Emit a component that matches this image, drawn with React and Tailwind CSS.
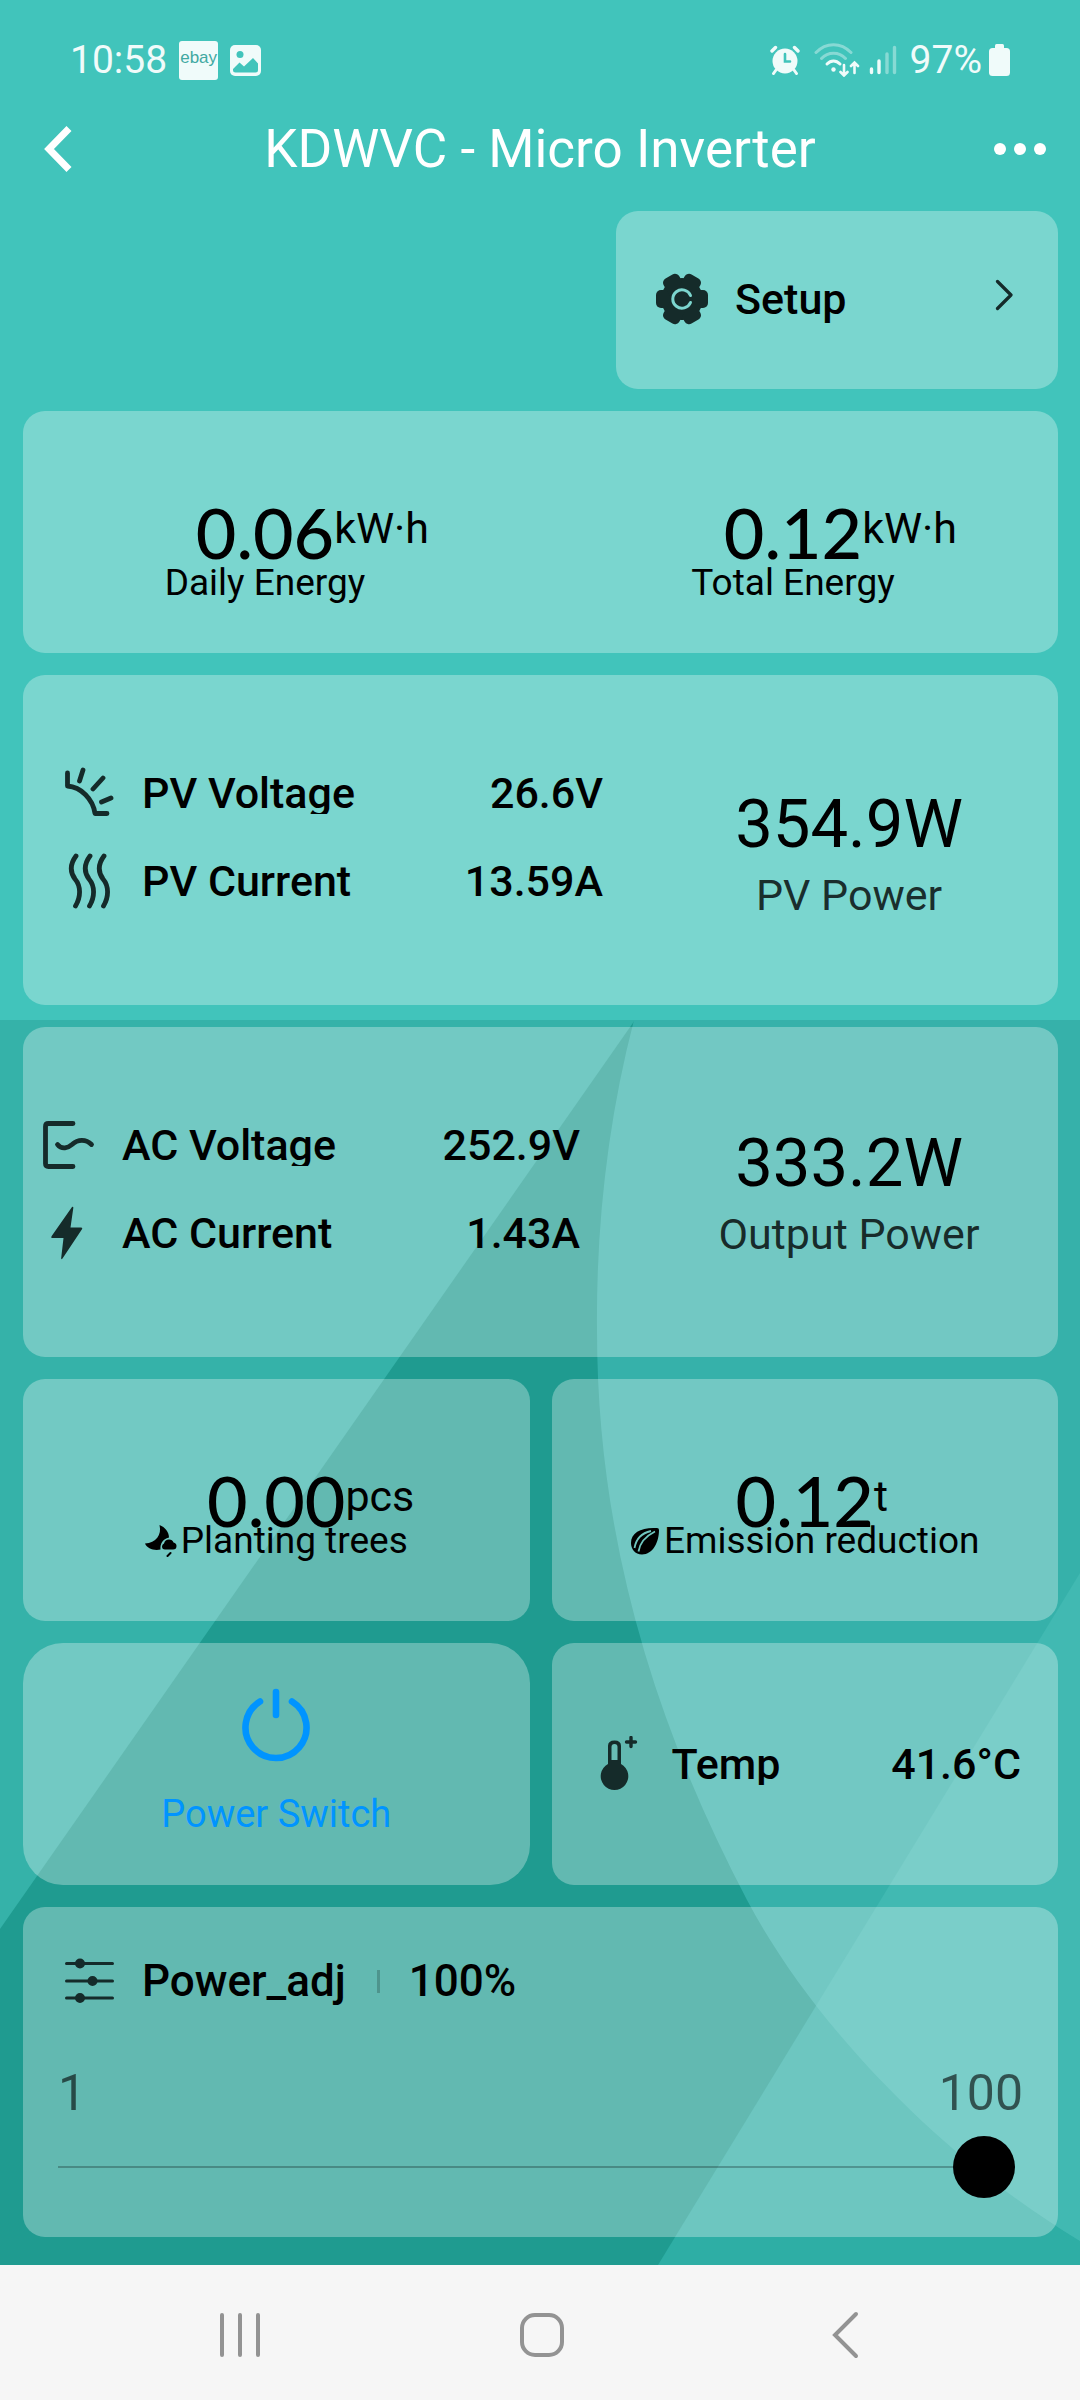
import { useState } from "react";

const INK = "#152b2a";

/* ---------- Icons ---------- */

function GearIcon() {
  return (
    <svg width="52" height="52" viewBox="-26 -26 52 52" fill={INK}>
      <circle r="21" />
      <rect x="-26" y="-9" width="52" height="18" rx="5" />
      <rect x="-26" y="-9" width="52" height="18" rx="5" transform="rotate(60)" />
      <rect x="-26" y="-9" width="52" height="18" rx="5" transform="rotate(120)" />
      <path d="M8.5 -3.5A9.2 9.2 0 1 0 8.5 3.5" fill="none" stroke="#7cd6cf" strokeWidth="3" strokeLinecap="round" />
    </svg>
  );
}

function SunIcon() {
  return (
    <svg width="52" height="52" viewBox="0 0 52 52" fill="none" stroke={INK} strokeWidth="4.8" strokeLinecap="round" strokeLinejoin="round">
      <path d="M4.5 6V19C18 20 30 32 32 46.500H44" />
      <path d="M20 3L16.500 14M40 11L30 22M48 31L38.500 35" />
    </svg>
  );
}

function WavesIcon() {
  return (
    <svg width="52" height="56" viewBox="0 0 52 56" fill="none" stroke={INK} strokeWidth="4.8" strokeLinecap="round">
      <path d="M13 3C7 11 7 19 12 26C18 33 18 44 12.500 53" />
      <path d="M27 3C21 11 21 19 26 26C32 33 32 44 26.500 53" />
      <path d="M41 3C35 11 35 19 40 26C46 33 46 44 40.500 53" />
    </svg>
  );
}

function OutputIcon() {
  return (
    <svg width="52" height="52" viewBox="0 0 52 52" fill="none" stroke={INK} strokeWidth="4.8" strokeLinecap="round" strokeLinejoin="round">
      <path d="M30 4.500H5.500Q2.500 4.500 2.500 7.500V44.500Q2.500 47.500 5.500 47.500H30" />
      <path d="M14.500 25.500C19 31 25 29 29 25.500C35 20 43 20 48.500 25.500" />
    </svg>
  );
}

function BoltIcon() {
  return (
    <svg width="52" height="54" viewBox="0 0 52 54" fill={INK}>
      <path d="M29 1Q30.500 0 30.300 2L27.500 21.500H38Q40 21.500 38.800 23.500L19.500 52.500Q18 54 18.200 52L20.500 32H9.500Q7.500 32 8.700 30Z" />
    </svg>
  );
}

function ThermometerIcon() {
  return (
    <svg width="52" height="56" viewBox="0 0 52 56">
      <path d="M15 28V10Q15 4.500 21.500 4.500Q28 4.500 28 10V28A13.800 13.800 0 1 1 15 28Z" fill={INK} />
      <path d="M18.500 24V11Q18.500 8 21.500 8Q24.500 8 24.500 11V24Z" fill="#69bdb6" />
      <path d="M38 1.500V10.500M33.500 6H42.500" stroke={INK} strokeWidth="3.4" strokeLinecap="round" />
    </svg>
  );
}

function SlidersIcon() {
  return (
    <svg width="52" height="48" viewBox="0 0 52 48" stroke={INK} strokeWidth="3" strokeLinecap="round" fill={INK}>
      <path d="M3.500 6.500H49.500M3.500 24H49.500M3.500 41H49.500" />
      <circle cx="17" cy="6.500" r="3.500" />
      <circle cx="29.500" cy="24" r="3.500" />
      <circle cx="17" cy="41" r="3.500" />
    </svg>
  );
}

function PowerIcon() {
  return (
    <svg width="68" height="74" viewBox="0 0 68 74" fill="none" stroke="#0094ff" strokeWidth="6.6" strokeLinecap="round">
      <path d="M34 4V27" />
      <path d="M18 13.500A30.500 30.500 0 1 0 50 13.500" />
    </svg>
  );
}

function TreeIcon() {
  return (
    <svg width="32" height="32" viewBox="0 0 32 32" fill="#000">
      <path d="M14.500 0C20 2 24 7 24 12.500C17.500 14 15 19 15.500 24.500C9 26 2 23.500 0 18.500C11 18 17 10 14.500 0Z" />
      <path d="M20 24.500Q17 24.500 17 21.500Q17 19.500 19 18.500Q20 14.500 24 14.500Q27.500 14.500 28.500 17.500Q31.500 18 31.500 21Q31.500 24.500 28 24.500Z" />
      <path d="M25.500 28L22.500 31" stroke="#000" strokeWidth="2" strokeLinecap="round" />
    </svg>
  );
}

function LeafIcon() {
  return (
    <svg width="30" height="28" viewBox="0 0 30 28">
      <path d="M27 1Q29 1 29 3C29 15 23 27.500 12 27.500C5 27.500 1 22 1 16C1 5 12 0 27 1Z" fill="#000" />
      <path d="M8.500 24.500C10 15 16 9 25 4.500M4.500 21C6 12 12 6 21 4" fill="none" stroke="#6fc6bf" strokeWidth="1.800" />
    </svg>
  );
}

function AlarmIcon() {
  return (
    <svg width="30" height="30" viewBox="0 0 30 30" fill="none" stroke="#f0fbfa" strokeLinecap="round">
      <circle cx="15" cy="16" r="12.500" fill="#f0fbfa" stroke="none" />
      <path d="M2 6L5.500 2.500M28 6L24.500 2.500" strokeWidth="3.400" />
      <path d="M6 25L3.500 28.500M24 25L26.500 28.500" strokeWidth="3" />
      <path d="M15 9V16.500H20" stroke="#41c4bb" strokeWidth="2.600" />
    </svg>
  );
}

function WifiIcon() {
  return (
    <svg width="46" height="34" viewBox="0 0 46 34" fill="none" stroke="#f0fbfa" strokeWidth="3" strokeLinecap="round">
      <path d="M2 9.500C12 -1 27 -1 37 9.500M7.500 15.500C14 8.500 25 8.500 31.500 15.500" opacity="0.4" />
      <path d="M13 21C17 17 22 17 26 21" />
      <circle cx="19.500" cy="26.500" r="2.200" fill="#f0fbfa" stroke="none" />
      <path d="M30 22V32M26.500 29L30 32.500L33.500 29M40.500 30V20M37 23L40.500 19.500L44 23" strokeWidth="2.600" />
    </svg>
  );
}

function SignalIcon() {
  return (
    <svg width="28" height="30" viewBox="0 0 28 30" stroke="#f0fbfa" strokeWidth="3.400" strokeLinecap="round">
      <path d="M2.500 24V27.500M10 16V27.500" />
      <path d="M18 9V27.500M25.500 2.500V27.500" opacity="0.4" />
    </svg>
  );
}

/* ---------- Building blocks ---------- */

function Card({ className = "", children }) {
  return <section className={`rounded-[22px] bg-white/30 ${className}`}>{children}</section>;
}

function IconBox({ children }) {
  return <span className="flex w-[52px] shrink-0 justify-center">{children}</span>;
}

function Reading({ icon, label, value }) {
  return (
    <div className="flex h-[42px] items-center gap-[27px] text-[43px] leading-[42px] font-medium">
      <IconBox>{icon}</IconBox>
      <span className="overflow-hidden">{label}</span>
      <span className="ml-auto">{value}</span>
    </div>
  );
}

function PowerTotal({ value, label, className = "" }) {
  return (
    <div className={`w-[418px] text-center ${className}`}>
      <p className="text-[67px] leading-[80px]">{value}</p>
      <p className="text-[43px] leading-[62px] text-black/80">{label}</p>
    </div>
  );
}

// The unit hangs off the number, so only the number itself is centred.
function Counter({ value, unit, label, icon, labelClass = "" }) {
  return (
    <div className="flex flex-col items-center pt-[92px]">
      <p className="relative font-['Lato','Roboto',sans-serif] text-[70px] leading-[58px] font-medium">
        {value}
        <span className="absolute -top-1 left-full font-['Roboto',sans-serif] text-[43px] leading-[58px] font-normal">
          {unit}
        </span>
      </p>
      <p className={`flex items-center gap-1 text-[37px] leading-[44px] ${labelClass}`}>
        {icon}
        {label}
      </p>
    </div>
  );
}

function Backdrop() {
  return (
    <svg className="absolute inset-x-0 bottom-0 h-[1245px] w-full" viewBox="0 1020 1080 1245" preserveAspectRatio="none" aria-hidden="true">
      <defs>
        <clipPath id="disc">
          <path d="M634 1020C608 1120 596 1225 597 1330C597 1530 650 1715 747 1900C815 2028 945 2160 1080 2241V1020Z" />
        </clipPath>
      </defs>
      <rect y="1020" width="1080" height="1245" fill="#1f9b90" />
      <path d="M0 1020H635L0 1929Z" fill="#35b2a9" />
      <path d="M1080 1573V2265H658Z" fill="#2eaea5" />
      <g clipPath="url(#disc)">
        <rect y="1020" width="1080" height="1245" fill="#36b1aa" />
        <path d="M1080 1573V2265H658Z" fill="#41b9b2" />
      </g>
    </svg>
  );
}

/* ---------- Page ---------- */

export default function App() {
  const [power, setPower] = useState(100);

  return (
    <div className="flex min-h-screen flex-col font-['Roboto',sans-serif] text-black">
      <div className="relative flex-1 bg-[#41c4bb]">
        <Backdrop />

        <div className="relative">
          {/* Status bar */}
          <div className="flex h-[120px] items-center pr-[70px] pl-[70px] text-[39px] text-[#f0fbfa]">
            <span>10:58</span>
            <span className="ml-[12px] flex size-[39px] items-center justify-center rounded-[3px] bg-[#f0fbfa] pb-1 font-['Liberation_Sans',sans-serif] text-[17px] text-[#41a9a2]">
              ebay
            </span>
            <svg className="ml-[12px]" width="31" height="31" viewBox="0 0 31 31">
              <rect width="31" height="31" rx="5" fill="#f0fbfa" />
              <circle cx="10" cy="9.500" r="3.500" fill="#41c4bb" />
              <path d="M3 24L9.500 17.500L14 21.500L23 13L28 18.500V25Q28 27.500 25.500 27.500H5.500Q3 27.500 3 25Z" fill="#41c4bb" />
            </svg>
            <div className="ml-auto flex items-center">
              <AlarmIcon />
              <span className="ml-[14px]"><WifiIcon /></span>
              <span className="ml-[9px]"><SignalIcon /></span>
              <span className="ml-[13px]">97%</span>
              <svg className="ml-[7px]" width="21" height="32" viewBox="0 0 21 32" fill="#f0fbfa">
                <rect x="6" width="9" height="8" rx="1.500" />
                <rect y="4" width="21" height="28" rx="3.500" />
              </svg>
            </div>
          </div>

          {/* Title bar */}
          <header className="flex h-[58px] items-center justify-between px-[34px] text-white">
            <button type="button" aria-label="Back" className="w-[52px] pl-[10px]">
              <svg width="28" height="46" viewBox="0 0 28 46" fill="none" stroke="currentColor" strokeWidth="7">
                <path d="M25 2.500L5 23L25 43.500" />
              </svg>
            </button>
            <h1 className="text-[53px] leading-[58px]">KDWVC - Micro Inverter</h1>
            <button type="button" aria-label="More" className="w-[52px]">
              <svg width="52" height="12" viewBox="0 0 52 12" fill="currentColor">
                <circle cx="6" cy="6" r="6" />
                <circle cx="26" cy="6" r="6" />
                <circle cx="46" cy="6" r="6" />
              </svg>
            </button>
          </header>

          <main className="flex flex-col gap-[22px] pt-[33px] pr-[22px] pb-[28px] pl-[23px]">
            <button
              type="button"
              className="ml-auto flex h-[178px] w-[442px] items-center gap-[27px] rounded-[22px] bg-white/30 pr-[45px] pb-[2px] pl-[40px] text-[43px] font-medium"
            >
              <IconBox><GearIcon /></IconBox>
              Setup
              <svg className="mb-2 ml-auto" width="18" height="32" viewBox="0 0 18 32" fill="none" stroke={INK} strokeWidth="3.200" strokeLinecap="round" strokeLinejoin="round">
                <path d="M2.500 2.500L16 16L2.500 29.500" />
              </svg>
            </button>

            <Card className="grid h-[242px] grid-cols-2 gap-[44px] pr-[23px]">
              <Counter value="0.06" unit="kW·h" label="Daily Energy" />
              <Counter value="0.12" unit="kW·h" label="Total Energy" />
            </Card>

            <Card className="flex h-[330px] items-center">
              <div className="flex flex-1 flex-col gap-[46px] pr-[37px] pb-[6px] pl-[40px]">
                <Reading icon={<SunIcon />} label="PV Voltage" value="26.6V" />
                <Reading icon={<WavesIcon />} label="PV Current" value="13.59A" />
              </div>
              <PowerTotal value="354.9W" label="PV Power" className="pt-[30px]" />
            </Card>

            <Card className="flex h-[330px] items-center">
              <div className="flex flex-1 flex-col gap-[46px] pr-[60px] pb-[6px] pl-[20px]">
                <Reading icon={<OutputIcon />} label="AC Voltage" value="252.9V" />
                <Reading icon={<BoltIcon />} label="AC Current" value="1.43A" />
              </div>
              <PowerTotal value="333.2W" label="Output Power" className="pt-1" />
            </Card>

            <div className="grid grid-cols-2 gap-[22px]">
              <Card className="h-[242px]">
                <Counter value="0.00" unit="pcs" label="Planting trees" icon={<TreeIcon />} labelClass="-mt-[10px]" />
              </Card>
              <Card className="h-[242px]">
                <Counter value="0.12" unit="t" label="Emission reduction" icon={<LeafIcon />} labelClass="-mt-[10px]" />
              </Card>
              <button type="button" className="flex h-[242px] flex-col items-center rounded-[40px] bg-white/30 pt-[45px] text-[38px] text-[#0094ff]">
                <PowerIcon />
                <span className="mt-[24px]">Power Switch</span>
              </button>
              <Card className="flex h-[242px] flex-col justify-center pr-[37px] pl-[41px]">
                <Reading icon={<ThermometerIcon />} label="Temp" value="41.6°C" />
              </Card>
            </div>

            <Card className="h-[330px] px-[35px] pt-[50px]">
              <div className="flex items-center pl-[5px] text-[44px] leading-[48px] font-medium">
                <IconBox><SlidersIcon /></IconBox>
                <label htmlFor="power-adj" className="ml-[27px]">Power_adj</label>
                <span className="ml-[31px] h-[23px] w-[3px] bg-black/20" />
                <output htmlFor="power-adj" className="ml-[29px]">{power}%</output>
              </div>
              <div className="mt-[58px] flex justify-between text-[50px] leading-[60px] text-black/60">
                <span>1</span>
                <span>100</span>
              </div>
              <div className="mt-[13px] pr-[8px]">
                <input
                  id="power-adj"
                  type="range"
                  min="1"
                  max="100"
                  value={power}
                  onChange={(e) => setPower(Number(e.target.value))}
                  className="block h-[62px] w-full appearance-none bg-transparent [&::-webkit-slider-runnable-track]:h-[2px] [&::-webkit-slider-runnable-track]:bg-black/25 [&::-webkit-slider-thumb]:-mt-[30px] [&::-webkit-slider-thumb]:size-[62px] [&::-webkit-slider-thumb]:appearance-none [&::-webkit-slider-thumb]:rounded-full [&::-webkit-slider-thumb]:bg-black"
                />
              </div>
            </Card>
          </main>
        </div>
      </div>

      {/* Android navigation */}
      <nav className="grid h-[135px] grid-cols-3 items-center bg-[#f6f6f6] pt-1 pr-[84px] pl-[89px] text-[#939393]">
        <button type="button" aria-label="Recents" className="flex justify-center">
          <svg width="42" height="46" viewBox="0 0 42 46" stroke="currentColor" strokeWidth="4" strokeLinecap="round">
            <path d="M3 3V43M21 3V43M39 3V43" />
          </svg>
        </button>
        <button type="button" aria-label="Home" className="flex justify-center">
          <svg width="46" height="46" viewBox="0 0 46 46" fill="none" stroke="currentColor" strokeWidth="4">
            <rect x="3" y="3" width="40" height="40" rx="13" />
          </svg>
        </button>
        <button type="button" aria-label="Back" className="flex justify-center">
          <svg width="28" height="48" viewBox="0 0 28 48" fill="none" stroke="currentColor" strokeWidth="4" strokeLinecap="round">
            <path d="M25 3L4 24L25 45" />
          </svg>
        </button>
      </nav>
    </div>
  );
}
